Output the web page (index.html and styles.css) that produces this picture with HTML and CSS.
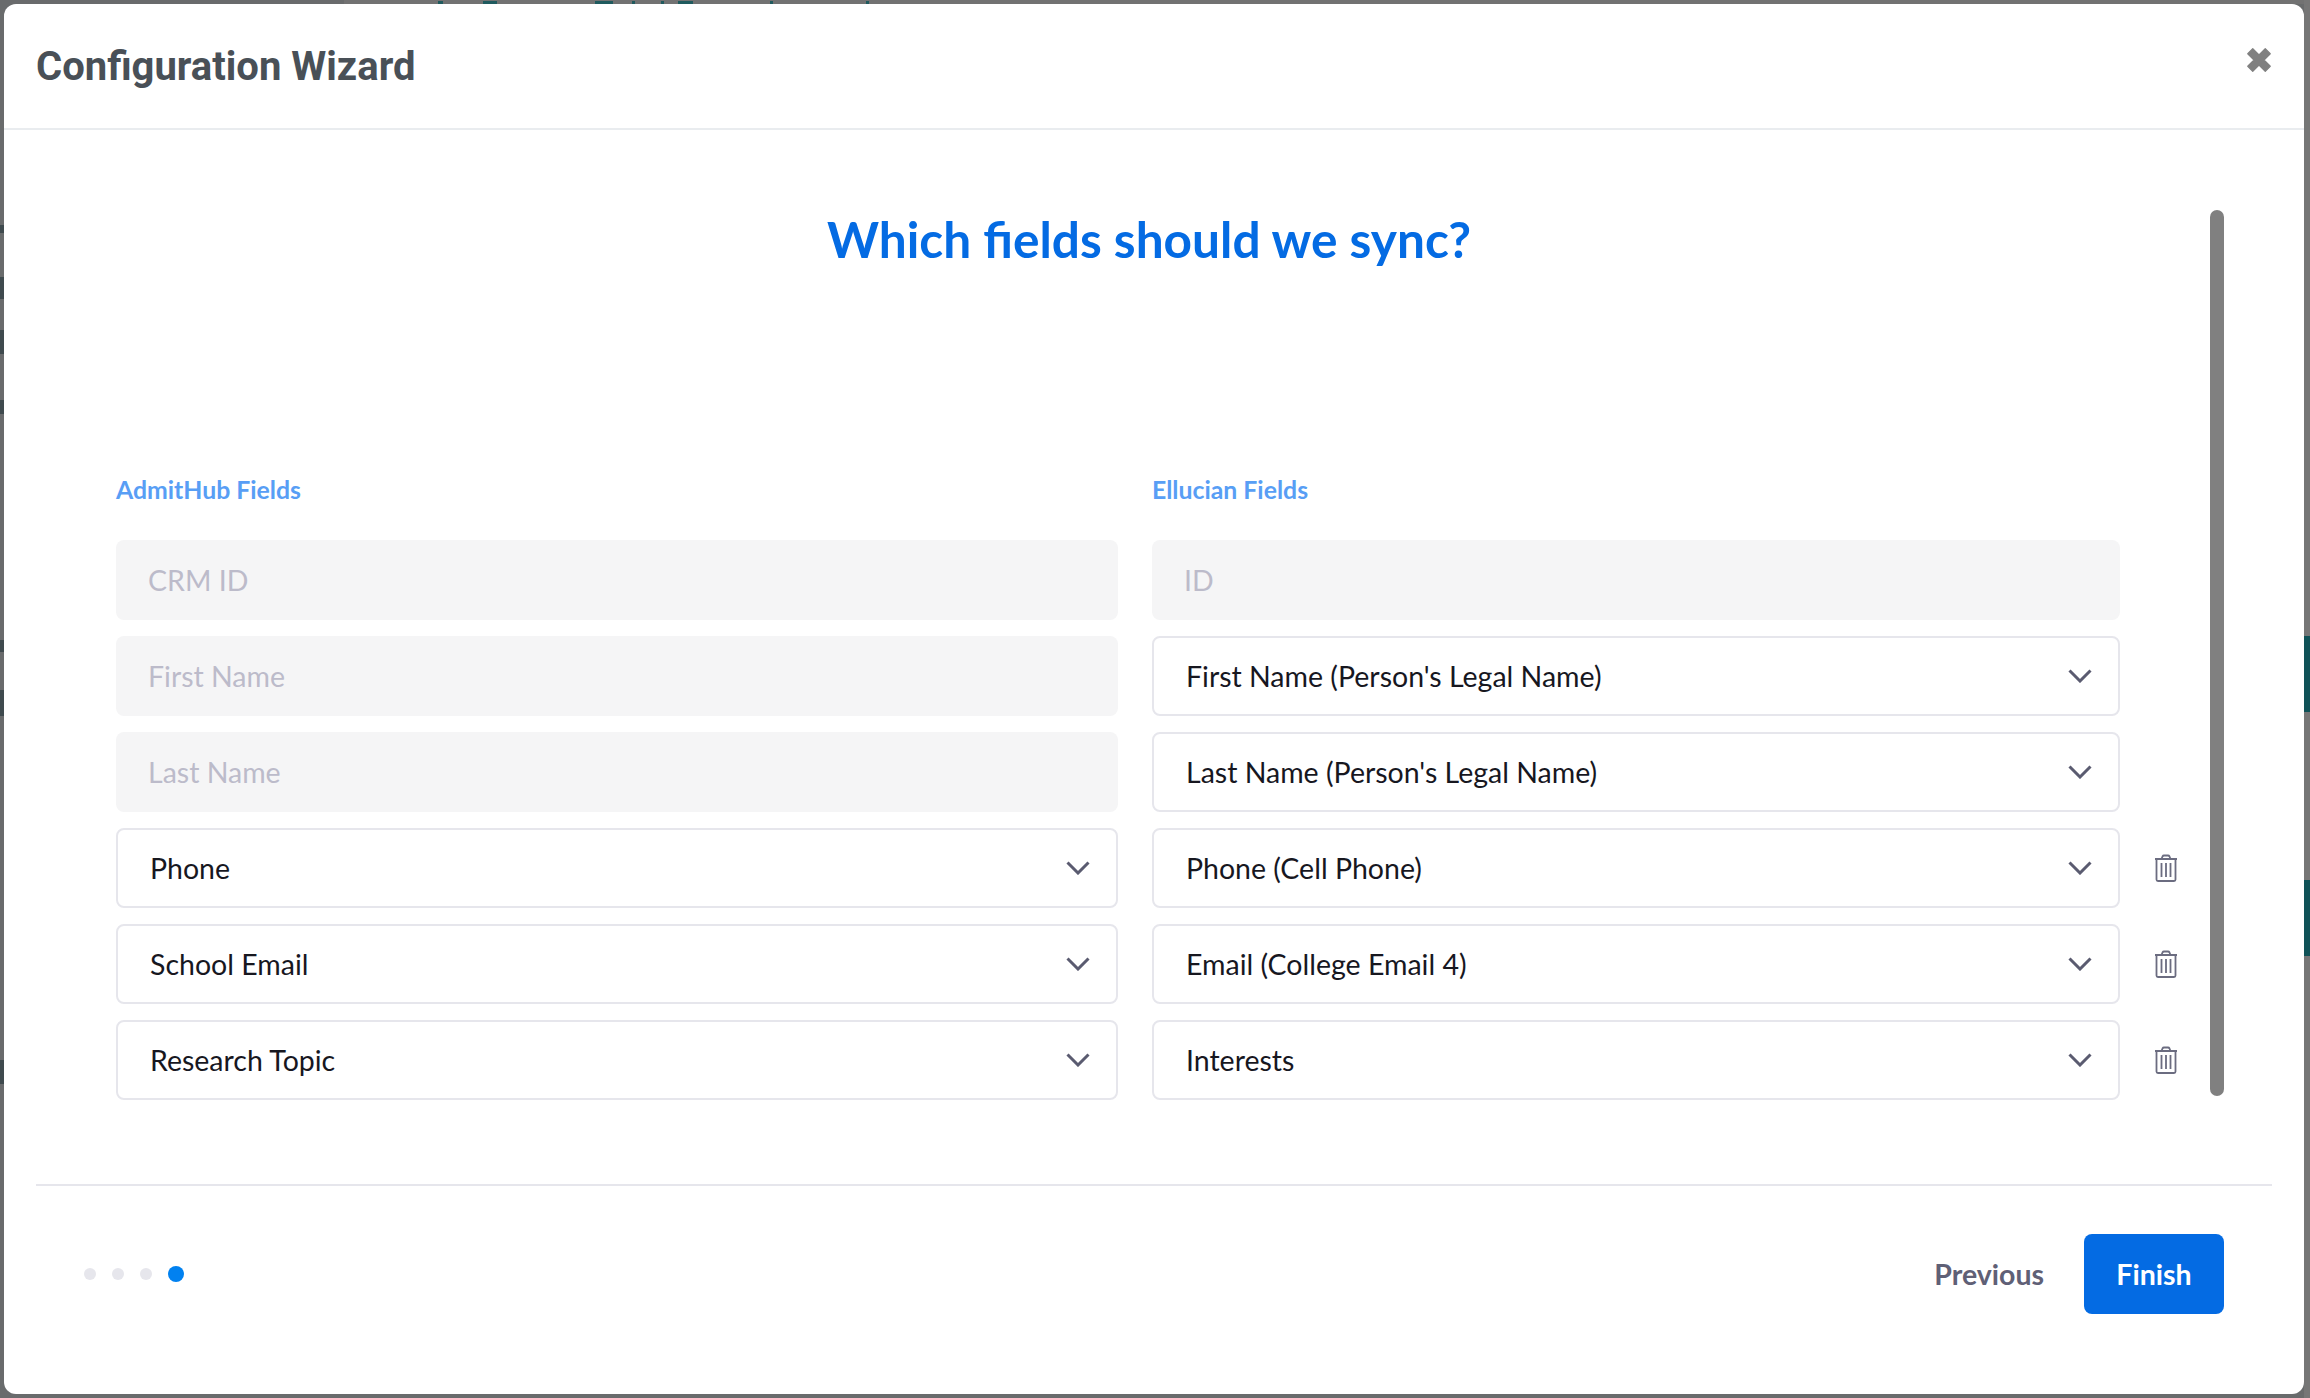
FILE: index.html
```html
<!DOCTYPE html>
<html lang="en">
<head>
<meta charset="utf-8">
<title>Configuration Wizard</title>
<link rel="stylesheet" href="styles.css">
</head>
<body>
<div class="backdrop" aria-hidden="true">
  <i class="panel-top"></i>
  <i class="panel-right"></i>
  <i class="band band-a"></i>
  <i class="band band-b"></i>
  <i class="mark mark-a"></i>
  <i class="mark mark-b"></i>
  <i class="mark mark-c"></i>
  <i class="mark mark-d"></i>
  <i class="mark mark-e"></i>
  <i class="mark mark-f"></i>
  <i class="mark mark-g"></i>
  <i class="tick tick-a"></i>
  <i class="tick tick-b"></i>
  <i class="tick tick-c"></i>
  <i class="tick tick-d"></i>
  <i class="tick tick-e"></i>
  <i class="tick tick-f"></i>
  <i class="tick tick-g"></i>
  <i class="tick tick-h"></i>
</div>
<div class="modal">
  <header class="modal-header">
    <h1 class="modal-title">Configuration Wizard</h1>
    <svg class="close" viewBox="0 0 24 24" aria-label="Close"><path d="M3 7 7 3l5 5 5-5 4 4-5 5 5 5-4 4-5-5-5 5-4-4 5-5z" fill="#808080" stroke="#808080" stroke-width="1" stroke-linejoin="round"/></svg>
  </header>
  <main class="modal-body">
    <div class="scroll-area">
      <h2 class="question">Which fields should we sync?</h2>
      <div class="grid">
        <div class="col-label">AdmitHub Fields</div>
        <div class="col-label">Ellucian Fields</div>
        <div></div>

        <div class="field disabled">CRM ID</div>
        <div class="field disabled">ID</div>
        <div></div>

        <div class="field disabled">First Name</div>
        <div class="field select"><span>First Name (Person's Legal Name)</span><svg class="chev" viewBox="0 0 24 14"><path d="M1.500 1.500 12 12 22.500 1.500"/></svg></div>
        <div></div>

        <div class="field disabled">Last Name</div>
        <div class="field select"><span>Last Name (Person's Legal Name)</span><svg class="chev" viewBox="0 0 24 14"><path d="M1.500 1.500 12 12 22.500 1.500"/></svg></div>
        <div></div>

        <div class="field select"><span>Phone</span><svg class="chev" viewBox="0 0 24 14"><path d="M1.500 1.500 12 12 22.500 1.500"/></svg></div>
        <div class="field select"><span>Phone (Cell Phone)</span><svg class="chev" viewBox="0 0 24 14"><path d="M1.500 1.500 12 12 22.500 1.500"/></svg></div>
        <svg class="trash" viewBox="0 0 24 28"><path d="M1 5h22M7.500 5 8.500 2.500Q9 1.500 10 1.500h4Q15 1.500 15.500 2.500L16.500 5M2.500 5v20.500q0 1.500 1.500 1.500h16q1.500 0 1.500-1.500V5M7.500 9v14M12 9v14M16.500 9v14"/></svg>

        <div class="field select"><span>School Email</span><svg class="chev" viewBox="0 0 24 14"><path d="M1.500 1.500 12 12 22.500 1.500"/></svg></div>
        <div class="field select"><span>Email (College Email 4)</span><svg class="chev" viewBox="0 0 24 14"><path d="M1.500 1.500 12 12 22.500 1.500"/></svg></div>
        <svg class="trash" viewBox="0 0 24 28"><path d="M1 5h22M7.500 5 8.500 2.500Q9 1.500 10 1.500h4Q15 1.500 15.500 2.500L16.500 5M2.500 5v20.500q0 1.500 1.500 1.500h16q1.500 0 1.500-1.500V5M7.500 9v14M12 9v14M16.500 9v14"/></svg>

        <div class="field select"><span>Research Topic</span><svg class="chev" viewBox="0 0 24 14"><path d="M1.500 1.500 12 12 22.500 1.500"/></svg></div>
        <div class="field select"><span>Interests</span><svg class="chev" viewBox="0 0 24 14"><path d="M1.500 1.500 12 12 22.500 1.500"/></svg></div>
        <svg class="trash" viewBox="0 0 24 28"><path d="M1 5h22M7.500 5 8.500 2.500Q9 1.500 10 1.500h4Q15 1.500 15.500 2.500L16.500 5M2.500 5v20.500q0 1.500 1.500 1.500h16q1.500 0 1.500-1.500V5M7.500 9v14M12 9v14M16.500 9v14"/></svg>
      </div>
    </div>
    <div class="scrollbar"></div>
  </main>
  <footer class="modal-footer">
    <div class="dots"><i class="dot"></i><i class="dot"></i><i class="dot"></i><i class="dot active"></i></div>
    <div class="actions">
      <span class="prev">Previous</span>
      <span class="finish">Finish</span>
    </div>
  </footer>
</div>
</body>
</html>
```
FILE: styles.css
```css
* { box-sizing: border-box; }
html, body { margin: 0; height: 100%; }
body {
  background: #696b6c;
  padding: 4px 6px 4px 4px;
  font-family: Lato, "Open Sans", sans-serif;
  overflow: hidden;
  position: relative;
}
.backdrop i { position: absolute; display: block; }
.panel-top { left: 344px; right: 0; top: 0; height: 4px; background: #727272; }
.panel-right { right: 0; top: 0; width: 6px; height: 1398px; background: #767676; }
.band { right: 0; width: 6px; height: 76px; background: #0f5257; }
.band-a { top: 636px; }
.band-b { top: 880px; }
.mark { left: 0; width: 4px; background: #3f4a4e; }
.mark-a { top: 225px; height: 8px; }
.mark-b { top: 277px; height: 22px; }
.mark-c { top: 330px; height: 24px; }
.mark-d { top: 400px; height: 14px; }
.mark-e { top: 640px; height: 12px; }
.mark-f { top: 690px; height: 26px; }
.mark-g { top: 1060px; height: 24px; }
.tick { top: 1px; height: 3px; background: #1f5a5e; }
.tick-a { left: 438px; width: 5px; }
.tick-b { left: 483px; width: 14px; }
.tick-c { left: 595px; width: 18px; }
.tick-d { left: 632px; width: 3px; }
.tick-e { left: 661px; width: 3px; }
.tick-f { left: 678px; width: 15px; }
.tick-g { left: 770px; width: 3px; }
.tick-h { left: 866px; width: 3px; }
.modal {
  height: 1390px;
  background: #fff;
  border-radius: 12px;
  display: flex;
  flex-direction: column;
  position: relative;
}
.modal-header {
  height: 126px;
  flex: none;
  border-bottom: 2px solid #e9ecef;
  padding: 0 30px 0 32px;
  display: flex;
  justify-content: space-between;
  align-items: flex-start;
}
.modal-title {
  margin: 37px 0 0;
  font: 700 40px/52px Roboto, sans-serif;
  color: #495057;
}
.close { width: 30px; height: 30px; margin-top: 41px; }
.modal-body {
  flex: none;
  height: 1054px;
  position: relative;
  padding: 0 0 0 112px;
}
.scroll-area { width: 2100px; }
.question {
  margin: 0;
  padding-top: 76px;
  text-align: center;
  width: 2066px;
  font: 700 49.600px/66px Lato, "Open Sans", sans-serif;
  color: #046be3;
}
.grid {
  display: grid;
  grid-template-columns: 1002px 968px 64px;
  column-gap: 34px;
  row-gap: 16px;
  margin-top: 201px;
  align-items: center;
}
.grid > .col-label { margin-bottom: 18px; }
.col-label {
  font: 700 24.800px/33px Lato, "Open Sans", sans-serif;
  color: #589ef5;
}
.field {
  height: 80px;
  border-radius: 8px;
  display: flex;
  align-items: center;
  padding: 0 32px 1px;
  font-size: 28.500px;
  white-space: nowrap;
}
.disabled { background: #f5f5f6; color: #bcbbca; }
.select {
  background: #fff;
  border: 2px solid #e6e6ec;
  color: #17171f;
  justify-content: space-between;
}
.chev {
  width: 24px;
  height: 14px;
  fill: none;
  stroke: #5a5b70;
  stroke-width: 3;
  margin-right: -6px;
  margin-top: 1px;
}
.trash {
  width: 24px;
  height: 28px;
  fill: none;
  stroke: #6b6c80;
  stroke-width: 1.800;
}
.scrollbar {
  position: absolute;
  left: 2206px;
  top: 80px;
  width: 14px;
  height: 886px;
  border-radius: 7px;
  background: #808080;
}
.modal-footer {
  margin: 0 32px;
  border-top: 2px solid #e6e6ec;
  flex: 1;
  display: flex;
  justify-content: space-between;
  align-items: flex-start;
  padding: 48px 48px 0 48px;
}
.dots { display: flex; align-items: center; gap: 16px; height: 80px; }
.dot { width: 12px; height: 12px; border-radius: 50%; background: #e6e6ec; }
.dot.active { width: 16px; height: 16px; background: #0181f0; }
.actions { display: flex; align-items: center; gap: 40px; }
.prev { font-size: 28.500px; font-weight: 700; color: #5f6076; }
.finish {
  width: 140px;
  height: 80px;
  border-radius: 8px;
  background: #046be3;
  color: #fff;
  font-size: 28.500px;
  font-weight: 700;
  display: flex;
  align-items: center;
  justify-content: center;
}
```
